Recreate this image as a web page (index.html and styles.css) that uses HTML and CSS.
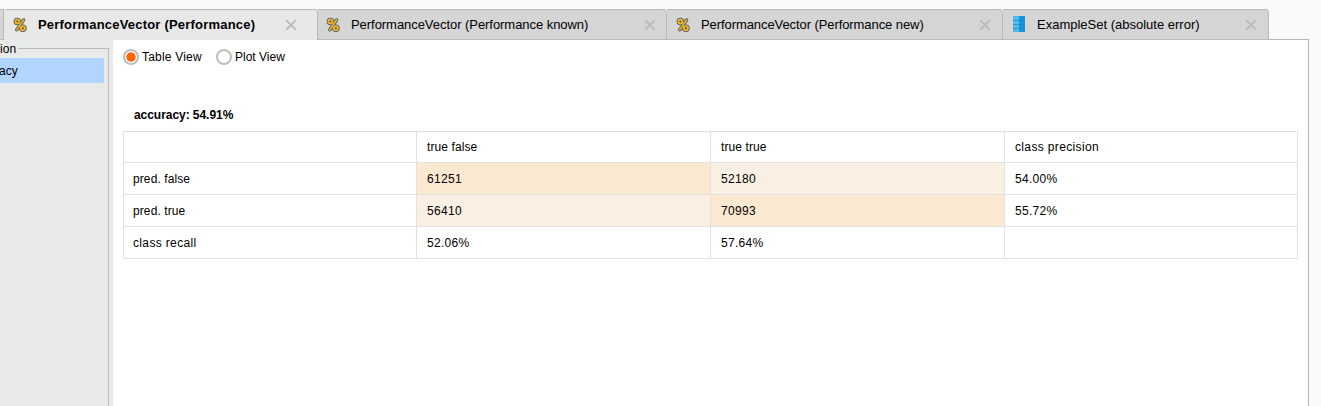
FILE: index.html
```html
<!DOCTYPE html>
<html lang="en">
<head>
<meta charset="utf-8">
<title>Performance results</title>
<link rel="stylesheet" href="styles.css">
</head>
<body>
<svg class="defs" width="0" height="0">
  <symbol id="percent" viewBox="0 0 14 16">
    <g fill="#44586a" stroke="#44586a" stroke-width="3.6" stroke-linecap="round">
      <circle cx="4.4" cy="4.5" r="2"/><circle cx="9.9" cy="11.3" r="2"/>
      <path d="M10.6 3 3.8 12.8" stroke-width="3.4"/>
    </g>
    <g fill="none" stroke="#f0b323" stroke-width="2" stroke-linecap="round">
      <circle cx="4.4" cy="4.5" r="2"/><circle cx="9.9" cy="11.3" r="2"/>
      <path d="M10.6 3 3.8 12.8" stroke-width="1.7"/>
    </g>
  </symbol>
  <symbol id="close" viewBox="0 0 12 12">
    <path d="M1.3 1.3 10.7 10.7M10.7 1.3 1.3 10.7" fill="none" stroke="#bababa" stroke-width="1.9"/>
  </symbol>
</svg>
<nav class="tabs">
  <div class="tab stub"></div>
  <div class="tab active"><svg class="icon"><use href="#percent"/></svg><span class="label">PerformanceVector (Performance)</span><svg class="close"><use href="#close"/></svg></div>
  <div class="tab known"><svg class="icon"><use href="#percent"/></svg><span class="label">PerformanceVector (Performance known)</span><svg class="close"><use href="#close"/></svg></div>
  <div class="tab new"><svg class="icon"><use href="#percent"/></svg><span class="label">PerformanceVector (Performance new)</span><svg class="close"><use href="#close"/></svg></div>
  <div class="tab example"><svg class="icon sheet" viewBox="0 0 12 16"><path fill="#54b9eb" d="M0 0h6v16H0z"/><path fill="#1296dc" d="M6 0h6v16H6z"/><path d="M0 4.5h12M0 8.5h12M0 12.5h12" stroke="#2385bd" stroke-width="1" stroke-opacity=".75"/></svg><span class="label">ExampleSet (absolute error)</span><svg class="close"><use href="#close"/></svg></div>
</nav>
<main class="panel">
  <aside class="sidebar">
    <div class="legend"><span>ion</span></div>
    <div class="group"><div class="selected">acy</div></div>
  </aside>
  <section class="content">
    <div class="views">
      <label class="view table-view"><span class="radio on"></span>Table View</label>
      <label class="view"><span class="radio"></span>Plot View</label>
    </div>
    <h1 class="accuracy">accuracy: 54.91%</h1>
    <div class="matrix">
      <div class="head"></div><div class="head">true false</div><div class="head">true true</div><div class="head wide">class precision</div>
      <div class="name">pred. false</div><div class="strong num">61251</div><div class="soft num">52180</div><div class="num">54.00%</div>
      <div class="name">pred. true</div><div class="soft num">56410</div><div class="strong num">70993</div><div class="num">55.72%</div>
      <div class="name wide">class recall</div><div class="num">52.06%</div><div class="num">57.64%</div><div></div>
    </div>
  </section>
</main>
</body>
</html>
```
FILE: styles.css
```css
* { box-sizing: border-box; }
body {
  margin: 0;
  height: 406px;
  overflow: hidden;
  background: #fafafa;
  color: #000;
  font: 12px/16px "Liberation Sans", Arial, sans-serif;
  display: flex;
  flex-direction: column;
  padding-top: 9px;
}
.defs { position: absolute; }

.tabs { display: flex; height: 31px; width: 1309px; border-bottom: 1px solid #b9b9b9; flex: none; }
.tab {
  display: flex;
  align-items: center;
  height: 30px;
  padding: 0 11px 0 9px;
  background: #d5d5d5;
  border: 1px solid #b9b9b9;
  border-width: 1px 1px 0 0;
  border-radius: 0 4px 0 0;
  font-size: 13px;
  white-space: nowrap;
}
.stub { width: 4px; padding: 0; border-radius: 0; }
.active { width: 314px; height: 31px; padding: 0 20px 1px 9px; background: #e8e8e8; border-radius: 4px 4px 0 0; font-weight: bold; letter-spacing: .2px; }
.known { width: 349px; letter-spacing: -.05px; padding: 0 10px 0 8px; }
.new { width: 336px; letter-spacing: -.08px; }
.example { width: 266px; }
.icon { width: 14px; height: 16px; margin-right: 11px; flex: none; }
.sheet { width: 12px; margin: 0 12px 1px 1px; }
.close { width: 12px; height: 12px; margin-left: auto; flex: none; }

.panel { display: flex; flex: 1; width: 1309px; background: #fff; border-right: 1px solid #b9b9b9; }
.sidebar { width: 113px; background: #e8eaea; padding-right: 4px; display: flex; flex-direction: column; }
.legend { display: flex; align-items: center; height: 17px; letter-spacing: .1px; }
.legend::after { content: ""; flex: 1; height: 1px; margin-left: 2px; background: #b9bbbb; }
.group { flex: 1; margin-top: -8px; padding-top: 9px; background: linear-gradient(#b9bbbb, #b9bbbb) right / 1px 100% no-repeat; }
.selected { width: 104px; height: 25px; line-height: 27px; background: #b0d6ff; text-indent: -1px; }

.content { flex: 1; padding: 8px 10px 0 10px; }
.views { display: flex; height: 18px; }
.view { display: flex; align-items: center; gap: 3px; }
.table-view { width: 93px; letter-spacing: .2px; }
.radio { width: 16px; height: 16px; border: 2px solid #bebebe; border-radius: 50%; background: #fff; }
.on { background: radial-gradient(circle, #ff6600 4.3px, #fff 5px); }
.accuracy { margin: 41px 0 8px 11px; font-size: 12px; line-height: 16px; letter-spacing: -.05px; }
.matrix {
  display: grid;
  grid-template-columns: 292px 293px 293px 292px;
  grid-template-rows: 30px 31px 31px 31px;
  gap: 1px;
  width: 1175px;
  height: 128px;
  padding: 1px;
  background: #e2e2e2;
}
.matrix > div { background: #fff; padding: 1px 0 0 10px; line-height: 30px; letter-spacing: .1px; }
.matrix > .head { line-height: 29px; }
.matrix > div:not(.head) { padding-top: 2px; line-height: 29px; }
.matrix > .name { padding-left: 9px; }
.matrix > .strong { background: #fae8d0; }
.matrix > .soft { background: #f9efe2; }
.matrix > .num { letter-spacing: .3px; }
.matrix > .wide { letter-spacing: .35px; }
```
